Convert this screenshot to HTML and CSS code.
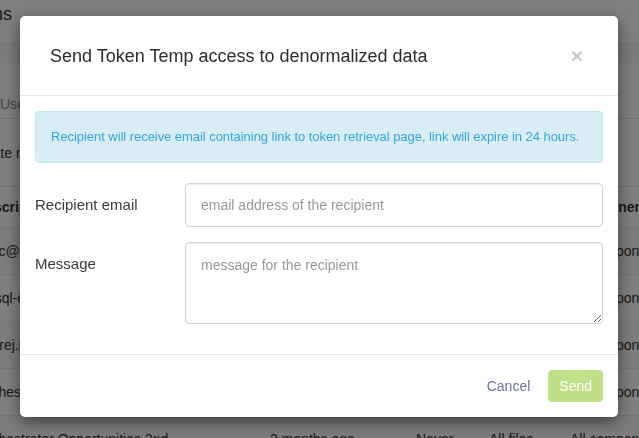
FILE: index.html
```html
<!DOCTYPE html>
<html>
<head>
<meta charset="utf-8">
<link rel="stylesheet" href="styles.css">
</head>
<body>
<div class="page">
  <div class="page-inner">
    <h1 class="page-title">Tokens</h1>
    <div class="band"></div>
    <div class="intro"><span>Use tokens to control access to your project.</span></div>
    <div class="actions"><span>Create new token</span></div>
    <table class="tokens">
      <thead>
        <tr><th class="c1">Description</th><th class="c2">Created</th><th class="c3">Expires</th><th class="c4">Files</th><th class="c5">Components</th></tr>
      </thead>
      <tbody>
        <tr><td>devc@keboola.com</td><td>2 months ago</td><td>Never</td><td>All files</td><td>All components</td></tr>
        <tr><td>mysql-export</td><td>2 months ago</td><td>Never</td><td>All files</td><td>All components</td></tr>
        <tr><td>andrej.pavlik@keboola.com</td><td>2 months ago</td><td>Never</td><td>All files</td><td>All components</td></tr>
        <tr><td>Orchestrator Opportunities 1st</td><td>2 months ago</td><td>Never</td><td>All files</td><td>All components</td></tr>
        <tr><td>Orchestrator Opportunities 2nd</td><td>2 months ago</td><td>Never</td><td>All files</td><td>All components</td></tr>
      </tbody>
    </table>
  </div>
</div>
<div class="backdrop"></div>
<div class="modal-wrap">
  <div class="modal">
    <div class="modal-header">
      <h4 class="modal-title">Send Token Temp access to denormalized data</h4>
      <span class="close">×</span>
    </div>
    <div class="modal-body">
      <div class="alert">Recipient will receive email containing link to token retrieval page, link will expire in 24 hours.</div>
      <div class="form-row">
        <label class="label">Recipient email</label>
        <input class="control input" type="text" placeholder="email address of the recipient">
      </div>
      <div class="form-row">
        <label class="label">Message</label>
        <textarea class="control textarea" placeholder="message for the recipient"></textarea>
      </div>
    </div>
    <div class="modal-footer">
      <span class="btn btn-link">Cancel</span>
      <span class="btn btn-send">Send</span>
    </div>
  </div>
</div>
</body>
</html>
```
FILE: styles.css
```css
html, body {
  margin: 0;
  padding: 0;
  width: 639px;
  height: 438px;
  overflow: hidden;
  background: #fff;
  font-family: "Liberation Sans", Helvetica, Arial, sans-serif;
  color: #333;
}

.page {
  width: 639px;
  height: 438px;
  overflow: hidden;
}

.page-inner {
  margin-left: -60px;
  width: 780px;
}

.page-title {
  margin: 0;
  padding: 2px 0 0 15px;
  height: 41px;
  font-size: 18px;
  font-weight: 400;
  line-height: 24px;
}

.band {
  height: 19px;
  background: #f4f4f4;
  border-top: 1px solid #e8e8e8;
}

.intro {
  height: 55px;
  border-bottom: 1px solid #e5e5e5;
  display: flex;
  align-items: flex-end;
  padding-left: 60px;
  font-size: 14px;
  color: #888;
  line-height: 28px;
}

.actions {
  height: 67px;
  border-bottom: 1px solid #e5e5e5;
  display: flex;
  align-items: center;
  padding-left: 30px;
  font-size: 14px;
  color: #333;
}

.tokens {
  margin-left: 36px;
  border-collapse: collapse;
  font-size: 14px;
  table-layout: fixed;
}

.tokens th, .tokens td {
  padding: 0;
  text-align: left;
  white-space: nowrap;
  overflow: hidden;
}

.tokens th {
  height: 40px;
  font-weight: 700;
  vertical-align: middle;
}

.tokens td {
  height: 46px;
  border-top: 1px solid #ececec;
  vertical-align: middle;
}

.tokens tbody tr:nth-child(odd) td {
  background: #f8f8f8;
}

.c1 { width: 294px; }
.c2 { width: 146px; }
.c3 { width: 73px; }
.c4 { width: 81px; }
.c5 { width: 140px; }

.backdrop {
  position: fixed;
  inset: 0;
  background: rgba(0, 0, 0, 0.5);
}

.modal-wrap {
  position: fixed;
  inset: 0;
  display: flex;
  justify-content: flex-start;
  align-items: flex-start;
  padding: 16px 0 0 20px;
}

.modal {
  width: 598px;
  background: #fff;
  border-radius: 5px;
  box-shadow: 0 5px 15px rgba(0, 0, 0, 0.5);
  display: flex;
  flex-direction: column;
}

.modal-header {
  display: flex;
  align-items: center;
  justify-content: space-between;
  height: 79px;
  padding: 0 35px 0 30px;
  border-bottom: 1px solid #e5e5e5;
}

.modal-title {
  margin: 0;
  font-size: 18px;
  font-weight: 400;
  color: #2c2c2c;
  line-height: 22px;
}

.close {
  font-size: 21px;
  font-weight: 700;
  line-height: 1;
  color: #c8c8c8;
}

.modal-body {
  padding: 15px;
}

.alert {
  background: #d9edf7;
  border: 1px solid #bce8f1;
  border-radius: 4px;
  color: #34a6da;
  font-size: 13px;
  line-height: 20px;
  letter-spacing: -0.05px;
  padding: 15px;
  margin-bottom: 20px;
}

.form-row {
  display: flex;
  align-items: flex-start;
  margin-bottom: 15px;
}

.label {
  width: 150px;
  flex: none;
  font-size: 15px;
  line-height: 44px;
  color: #3a3a3a;
}

.control {
  flex: 1;
  box-sizing: border-box;
  border: 1px solid #d2d2d8;
  border-radius: 4px;
  box-shadow: inset 0 1px 1px rgba(0, 0, 0, 0.075);
  font-family: "Liberation Sans", Helvetica, Arial, sans-serif;
  font-size: 14px;
  color: #555;
  margin: 0;
  outline: none;
  background: #fff;
}

.input {
  height: 44px;
  padding: 0 15px;
}

.textarea {
  height: 82px;
  padding: 12px 15px;
  resize: vertical;
  line-height: 20px;
}

.control::placeholder {
  color: #999;
}

.modal-footer {
  border-top: 1px solid #e5e5e5;
  padding: 15px;
  display: flex;
  justify-content: flex-end;
  align-items: center;
  gap: 7px;
}

.btn {
  font-size: 14px;
  line-height: 20px;
  padding: 5px 10px;
  border-radius: 4px;
  border: 1px solid transparent;
}

.btn-link {
  color: #66789a;
}

.btn-send {
  background: #bfe086;
  border-color: #bfe086;
  color: #fff;
}
```
